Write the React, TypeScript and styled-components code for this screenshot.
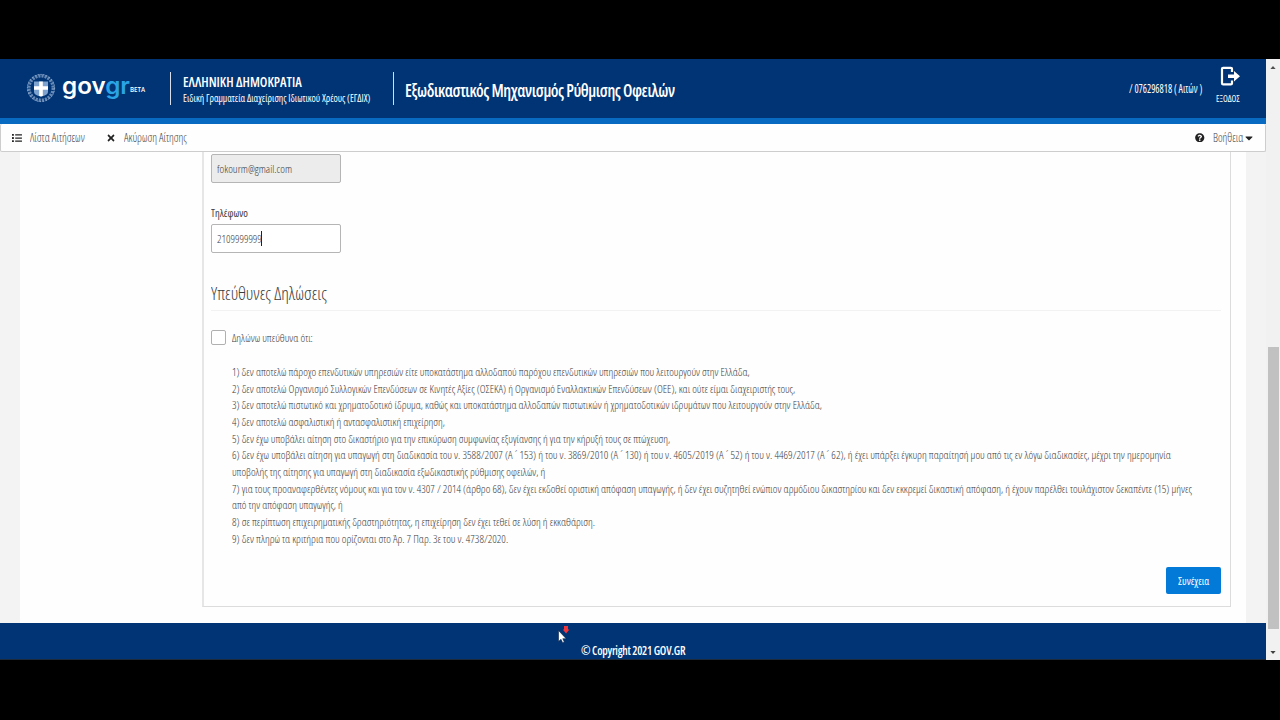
import React, { useLayoutEffect, useRef, useState } from 'react';
import styled, { createGlobalStyle } from 'styled-components';
import { FaCaretDown, FaList, FaQuestionCircle, FaTimes } from 'react-icons/fa';

const GlobalStyle = createGlobalStyle`
  * { box-sizing: border-box; }
  body { margin: 0; background: #000; overflow: hidden; }
`;

const FitBox = styled.span<{ $w: number }>`
  display: block;
  flex: none;
  width: ${(p) => p.$w}px;
  white-space: nowrap;
`;
const FitText = styled.span`
  display: inline-block;
  transform-origin: 0 50%;
`;

/* Condenses a run of text horizontally so that it fills a given width. */
function Condensed({ w, children }: { w: number; children: React.ReactNode }) {
  const ref = useRef<HTMLSpanElement>(null);
  const [scale, setScale] = useState(1);
  useLayoutEffect(() => {
    if (ref.current) setScale(w / ref.current.offsetWidth);
  }, [w]);
  return (
    <FitBox $w={w}>
      <FitText ref={ref} style={{ transform: `scaleX(${scale})` }}>{children}</FitText>
    </FitBox>
  );
}

const Screen = styled.div`
  width: 1280px;
  height: 720px;
  padding: 59px 0 60px;
  background: #000;
  display: flex;
  font-family: 'Open Sans', 'Noto Sans', sans-serif;
  font-stretch: 75%;
`;
const Page = styled.div`
  width: 1266px;
  height: 601px;
  display: flex;
  flex-direction: column;
  background: #f3f3f3;
`;
const Header = styled.header`
  height: 65px;
  flex: none;
  display: flex;
  background: #003474;
  border-bottom: 6px solid #086bc1;
  color: #fff;
  padding-left: 26px;
`;
const Emblem = styled.svg`
  width: 30px;
  height: 32px;
  margin-top: 13px;
`;
const Brand = styled.div`
  display: flex;
  margin: 11px 0 0 6px;
  font: 600 23.5px/32px Inter, sans-serif;
  width: 68px;
`;
const BrandAccent = styled.span`
  color: #2ba4e6;
`;
const Beta = styled.div`
  width: 40px;
  padding-top: 25px;
  font: 600 7px/11px 'Open Sans', sans-serif;
`;
const Rule = styled.div`
  width: 1px;
  height: 33px;
  margin-top: 13px;
  background: #d5deea;
`;
const Ministry = styled.div`
  width: 210px;
  margin-left: 12px;
  padding-top: 14px;
`;
const MinistryName = styled.div`
  font-size: 13.5px;
  font-weight: 600;
  line-height: 18px;
`;
const MinistryUnit = styled.div`
  font-size: 11.5px;
  line-height: 14px;
`;
const AppTitle = styled.h1`
  flex: 1;
  margin: 18px 0 0 11px;
  font-size: 18.5px;
  font-weight: 600;
  line-height: 25px;
  letter-spacing: -0.5px;
`;
const User = styled.div`
  padding-top: 22px;
  margin-right: 14px;
  font-size: 12px;
  line-height: 16px;
`;
const Exit = styled.div`
  width: 50px;
  padding-top: 7px;
  font-size: 9.5px;
  line-height: 13px;
  svg { display: block; margin: 0 0 6px 4px; }
`;
const Toolbar = styled.nav`
  height: 28px;
  flex: none;
  display: flex;
  align-items: center;
  background: #fefefe;
  border: 1px solid #cdcdcd;
  border-top: 0;
  border-radius: 2px;
  padding: 0 10px 0 11px;
  font-size: 12px;
  font-weight: 300;
  color: #444;
  svg { color: #222; flex: none; }
`;
const ToolItem = styled.div<{ $gap: number; $after?: number }>`
  display: flex;
  align-items: center;
  gap: ${(p) => p.$gap}px;
  margin-right: ${(p) => p.$after ?? 0}px;
`;
const Spacer = styled.div`
  flex: 1;
`;
const Main = styled.main`
  height: 471px;
  margin: 0 20px;
  padding: 0 15px 16px 182px;
  background: #fefefe;
`;
const Panel = styled.section`
  height: 455px;
  display: flex;
  flex-direction: column;
  border: solid #dcdcdc;
  border-width: 0 1px 1px 2px;
  border-left-color: #e6e6e6;
  padding: 2px 9px 12px 7px;
  color: #3c3c3c;
  font-weight: 300;
`;
const Field = styled.div<{ $disabled?: boolean }>`
  width: 130px;
  height: 29px;
  flex: none;
  display: flex;
  align-items: center;
  padding-left: 5px;
  border: 1px solid #b5b5b5;
  border-radius: 2px;
  background: ${(p) => (p.$disabled ? '#ececec' : '#fff')};
  font-size: 11.5px;
`;
const TextCursor = styled.i`
  width: 1px;
  height: 15px;
  margin-left: -1px;
  background: #222;
`;
const Label = styled.label`
  margin: 22px 0 3px;
  font-size: 11.5px;
  font-weight: 500;
  line-height: 16px;
`;
const SectionTitle = styled.h2`
  margin: 27px 0 0;
  height: 31px;
  font-size: 17.5px;
  font-weight: 300;
  line-height: 26px;
  border-bottom: 1px solid #f2f2f2;
`;
const Consent = styled.div`
  display: flex;
  align-items: center;
  gap: 6px;
  margin: 19px 0;
  height: 15px;
  font-size: 11.5px;
  line-height: 17px;
`;
const Checkbox = styled.span`
  width: 15px;
  height: 15px;
  border: 1px solid #b0b0b0;
  border-radius: 2px;
  background: #fff;
`;
const Terms = styled.div`
  flex: 1;
  margin-left: 21.4px;
  font-size: 11.5px;
  line-height: 16.65px;
`;
const Submit = styled.button`
  align-self: flex-end;
  width: 55px;
  height: 27px;
  border: 0;
  border-radius: 2px;
  padding: 0 0 0 12px;
  background: #047ad8;
  color: #fff;
  font: inherit;
  font-weight: 400;
  font-size: 11.5px;
  text-align: left;
`;
const Footer = styled.footer`
  height: 37px;
  display: flex;
  padding: 18px 0 0 581px;
  background: #003474;
  border-bottom: 1px solid #1c2a3c;
  color: #fff;
  font-size: 13px;
  font-weight: 600;
  line-height: 18px;
  letter-spacing: -0.3px;
`;
const Pointer = styled.svg`
  position: absolute;
  left: 557px;
  top: 625px;
`;
const Scrollbar = styled.div`
  width: 14px;
  height: 601px;
  display: flex;
  flex-direction: column;
  align-items: center;
  background: #f1f1f1;
`;
const Arrow = styled.svg`
  width: 6px;
  height: 3px;
  margin: 7px 0 6px;
  flex: none;
`;
const Thumb = styled.div`
  width: 11px;
  height: 282px;
  margin: 272px 0 auto 1px;
  background: #c1c1c1;
`;

const terms: [number, string][] = [
  [517.5, '1) δεν αποτελώ πάροχο επενδυτικών υπηρεσιών είτε υποκατάστημα αλλοδαπού παρόχου επενδυτικών υπηρεσιών που λειτουργούν στην Ελλάδα,'],
  [563, '2) δεν αποτελώ Οργανισμό Συλλογικών Επενδύσεων σε Κινητές Αξίες (ΟΣΕΚΑ) ή Οργανισμό Εναλλακτικών Επενδύσεων (ΟΕΕ), και ούτε είμαι διαχειριστής τους,'],
  [590, '3) δεν αποτελώ πιστωτικό και χρηματοδοτικό ίδρυμα, καθώς και υποκατάστημα αλλοδαπών πιστωτικών ή χρηματοδοτικών ιδρυμάτων που λειτουργούν στην Ελλάδα,'],
  [213, '4) δεν αποτελώ ασφαλιστική ή αντασφαλιστική επιχείρηση,'],
  [438, '5) δεν έχω υποβάλει αίτηση στο δικαστήριο για την επικύρωση συμφωνίας εξυγίανσης ή για την κήρυξή τους σε πτώχευση,'],
  [939, '6) δεν έχω υποβάλει αίτηση για υπαγωγή στη διαδικασία του ν. 3588/2007 (Α ´ 153) ή του ν. 3869/2010 (Α ´ 130) ή του ν. 4605/2019 (Α ´ 52) ή του ν. 4469/2017 (Α ´ 62), ή έχει υπάρξει έγκυρη παραίτησή μου από τις εν λόγω διαδικασίες, μέχρι την ημερομηνία'],
  [313.5, 'υποβολής της αίτησης για υπαγωγή στη διαδικασία εξωδικαστικής ρύθμισης οφειλών, ή'],
  [960, '7) για τους προαναφερθέντες νόμους και για τον ν. 4307 / 2014 (άρθρο 68), δεν έχει εκδοθεί οριστική απόφαση υπαγωγής, ή δεν έχει συζητηθεί ενώπιον αρμόδιου δικαστηρίου και δεν εκκρεμεί δικαστική απόφαση, ή έχουν παρέλθει τουλάχιστον δεκαπέντε (15) μήνες'],
  [111, 'από την απόφαση υπαγωγής, ή'],
  [363, '8) σε περίπτωση επιχειρηματικής δραστηριότητας, η επιχείρηση δεν έχει τεθεί σε λύση ή εκκαθάριση.'],
  [276, '9) δεν πληρώ τα κριτήρια που ορίζονται στο Άρ. 7 Παρ. 3ε του ν. 4738/2020.'],
];

export default function App() {
  return (
    <Screen>
      <GlobalStyle />
      <Page>
        <Header>
          <Emblem viewBox="0 0 30 32">
            <g fill="none" stroke="#9db7d8">
              <circle cx="15" cy="16" r="12.2" strokeWidth="3.4" strokeDasharray="2.2 1" opacity=".65" />
              <circle cx="15" cy="16" r="13.6" strokeWidth="1" strokeDasharray="1.4 1.6" opacity=".8" />
            </g>
            <path d="M8 9.500h14v10.500q0 3-7 4.500-7-1.500-7-4.500z" fill="#7fa3cf" />
            <path d="M13.200 9.500h3.600v4.800h5.200v3.400h-5.200v6.300l-1.800.5-1.800-.5v-6.300h-5.200v-3.400h5.200z" fill="#fff" />
          </Emblem>
          <Brand>
            <Condensed w={68}>gov<BrandAccent>gr</BrandAccent></Condensed>
          </Brand>
          <Beta><Condensed w={15}>BETA</Condensed></Beta>
          <Rule />
          <Ministry>
            <MinistryName><Condensed w={119}>ΕΛΛΗΝΙΚΗ ΔΗΜΟΚΡΑΤΙΑ</Condensed></MinistryName>
            <MinistryUnit><Condensed w={187.5}>Ειδική Γραμματεία Διαχείρισης Ιδιωτικού Χρέους (ΕΓΔΙΧ)</Condensed></MinistryUnit>
          </Ministry>
          <Rule />
          <AppTitle><Condensed w={270}>Εξωδικαστικός Μηχανισμός Ρύθμισης Οφειλών</Condensed></AppTitle>
          <User><Condensed w={73}>/ 076296818 ( Αιτών )</Condensed></User>
          <Exit>
            <svg width="20" height="20" viewBox="0 0 20 20" fill="none" stroke="#fff" strokeWidth="2.200">
              <path d="M12 6V3Q12 1.800 10.800 1.800H3.200Q2 1.800 2 3V17.200Q2 18.400 3.200 18.400H10.800Q12 18.400 12 17.200V14.500" />
              <path d="M8 8.500h6V5l6 5.200-6 5.200v-3.500H8z" fill="#fff" stroke="none" />
            </svg>
            <Condensed w={24}>ΕΞΟΔΟΣ</Condensed>
          </Exit>
        </Header>
        <Toolbar>
          <ToolItem $gap={8} $after={21}>
            <FaList size={10} />
            <Condensed w={54.5}>Λίστα Αιτήσεων</Condensed>
          </ToolItem>
          <ToolItem $gap={8}>
            <FaTimes size={10} />
            <Condensed w={62.5}>Ακύρωση Αίτησης</Condensed>
          </ToolItem>
          <Spacer />
          <ToolItem $gap={8}>
            <FaQuestionCircle size={9.5} />
            <Condensed w={30.5}>Βοήθεια</Condensed>
          </ToolItem>
          <FaCaretDown size={12} />
        </Toolbar>
        <Main>
          <Panel>
            <Field $disabled><Condensed w={75}>fokourm@gmail.com</Condensed></Field>
            <Label><Condensed w={36.5}>Τηλέφωνο</Condensed></Label>
            <Field><Condensed w={45}>2109999999</Condensed><TextCursor /></Field>
            <SectionTitle><Condensed w={115.5}>Υπεύθυνες Δηλώσεις</Condensed></SectionTitle>
            <Consent>
              <Checkbox />
              <Condensed w={80.5}>Δηλώνω υπεύθυνα ότι:</Condensed>
            </Consent>
            <Terms>
              {terms.map(([w, text]) => <Condensed key={text} w={w}>{text}</Condensed>)}
            </Terms>
            <Submit><Condensed w={31.5}>Συνέχεια</Condensed></Submit>
          </Panel>
        </Main>
        <Footer><Condensed w={104.5}>© Copyright 2021 GOV.GR</Condensed></Footer>
      </Page>
      <Scrollbar>
        <Arrow viewBox="0 0 7 4"><path d="M0 4L3.500 0 7 4z" fill="#505050" /></Arrow>
        <Thumb />
        <Arrow viewBox="0 0 7 4"><path d="M0 0h7L3.500 4z" fill="#404040" /></Arrow>
      </Scrollbar>
      <Pointer width="14" height="18" viewBox="0 0 14 18">
        <path d="M1.500 5.500v11l2.500-2.200 1.600 3.400 1.700-.8-1.500-3.200h3.400z" fill="#fff" stroke="#0b2348" strokeWidth=".6" />
        <path d="M7 1h4v3.500h1.500L9 8.500 5.800 4.500H7z" fill="#f0353b" />
      </Pointer>
    </Screen>
  );
}
